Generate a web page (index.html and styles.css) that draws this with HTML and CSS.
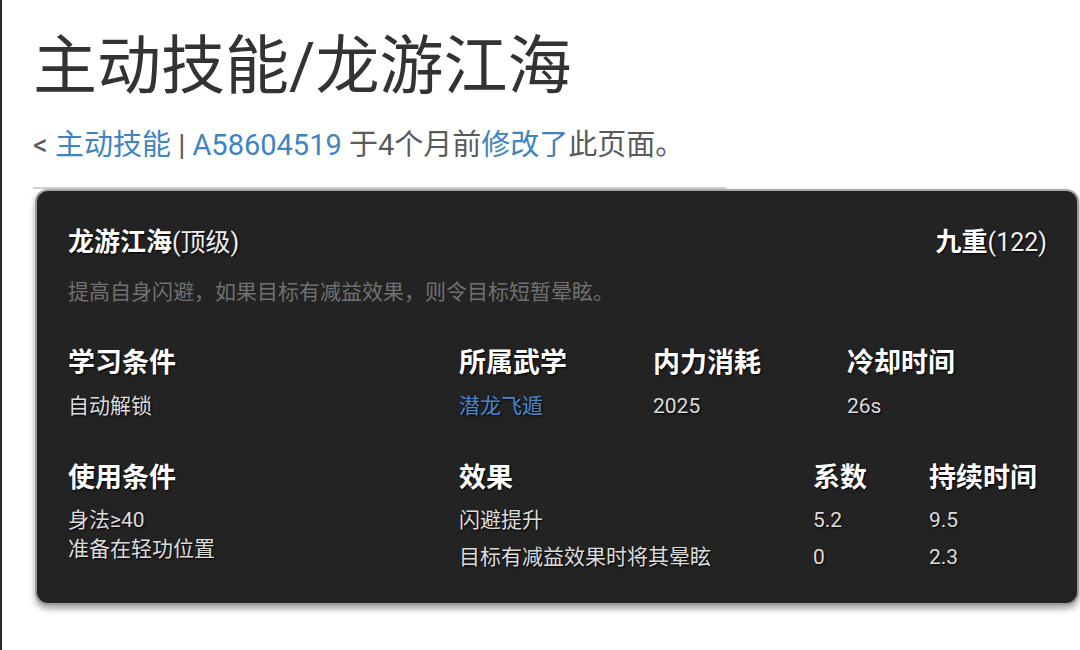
FILE: index.html
```html
<!DOCTYPE html>
<html lang="zh">
<head>
<meta charset="utf-8">
<title>主动技能/龙游江海</title>
<link rel="stylesheet" href="styles.css">
</head>
<body>
<div class="page">
  <h1 class="title">主动技能/龙游江海</h1>
  <div class="sub">&lt; <a class="lnk">主动技能</a> | <a class="lnk">A58604519</a> 于4个月前<a class="lnk">修改了</a>此页面。</div>
  <div class="rule"></div>
  <div class="card">
    <div class="head">
      <div class="name"><b>龙游江海</b>(顶级)</div>
      <div class="name"><b>九重</b>(122)</div>
    </div>
    <div class="desc">提高自身闪避，如果目标有减益效果，则令目标短暂晕眩。</div>
    <div class="row1">
      <div class="cell"><div class="h">学习条件</div><div class="v">自动解锁</div></div>
      <div class="cell"><div class="h">所属武学</div><div class="v"><a class="blue">潜龙飞遁</a></div></div>
      <div class="cell"><div class="h">内力消耗</div><div class="v">2025</div></div>
      <div class="cell"><div class="h">冷却时间</div><div class="v">26s</div></div>
    </div>
    <div class="row2">
      <div class="use">
        <div class="h">使用条件</div>
        <div class="v lines">身法≥40<br>准备在轻功位置</div>
      </div>
      <div class="effects">
        <div class="h">效果</div><div class="h">系数</div><div class="h">持续时间</div>
        <div class="v">闪避提升</div><div class="v">5.2</div><div class="v">9.5</div>
        <div class="v">目标有减益效果时将其晕眩</div><div class="v">0</div><div class="v">2.3</div>
      </div>
    </div>
  </div>
</div>
</body>
</html>
```

FILE: styles.css
```css
html {
  margin: 0;
  background: #fff;
}
body {
  margin: 0;
  min-height: 650px;
  border-left: 2px solid #2a2a2a;
  font-family: Roboto, "Noto Sans CJK SC", sans-serif;
  color: #333;
}
.page {
  padding: 29px 0 0 31px;
}
.title {
  margin: 0;
  font-size: 64px;
  line-height: 76px;
  font-weight: 400;
  color: #333;
}
.sub {
  margin-top: 22px;
  font-size: 29px;
  line-height: 36px;
  color: #5a5a5a;
}
.lnk {
  color: #3f84c0;
  text-decoration: none;
}
.rule {
  margin-top: 24px;
  width: 693px;
  height: 2px;
  background: #d2d2d2;
}
.card {
  margin-left: 2px;
  width: 1044px;
  box-sizing: border-box;
  background: #232323;
  border: 2px solid #9a9a9a;
  border-top-color: #a8a8a8;
  border-radius: 13px;
  box-shadow: 0 4px 6px rgba(0, 0, 0, 0.35);
  padding: 35px 30px 32px 31px;
  color: #e0e0e0;
  text-shadow: 1px 1px 2px #000;
}
.head {
  display: flex;
  justify-content: space-between;
  align-items: baseline;
  font-size: 25px;
  line-height: 32px;
  color: #eee;
}
.head b {
  font-weight: 700;
  color: #fff;
  font-size: 26px;
}
.desc {
  margin-top: 19px;
  font-size: 21px;
  line-height: 28px;
  color: #707070;
  text-shadow: none;
}
.h {
  font-size: 27px;
  line-height: 32px;
  font-weight: 700;
  color: #fff;
}
.v {
  font-size: 21px;
  line-height: 28px;
  color: #dcdcdc;
}
.row1 {
  margin-top: 41px;
  display: grid;
  grid-template-columns: 391px 194px 194px 1fr;
}
.row1 .v {
  margin-top: 13px;
}
.blue {
  color: #4a86d0;
  text-decoration: none;
}
.row2 {
  margin-top: 42px;
  display: flex;
}
.use {
  width: 391px;
}
.use .lines {
  margin-top: 12px;
  line-height: 29px;
}
.effects {
  flex: 1;
  display: grid;
  grid-template-columns: 354px 116px 1fr;
  row-gap: 9px;
}
.effects .h {
  margin-bottom: 3px;
}
```
